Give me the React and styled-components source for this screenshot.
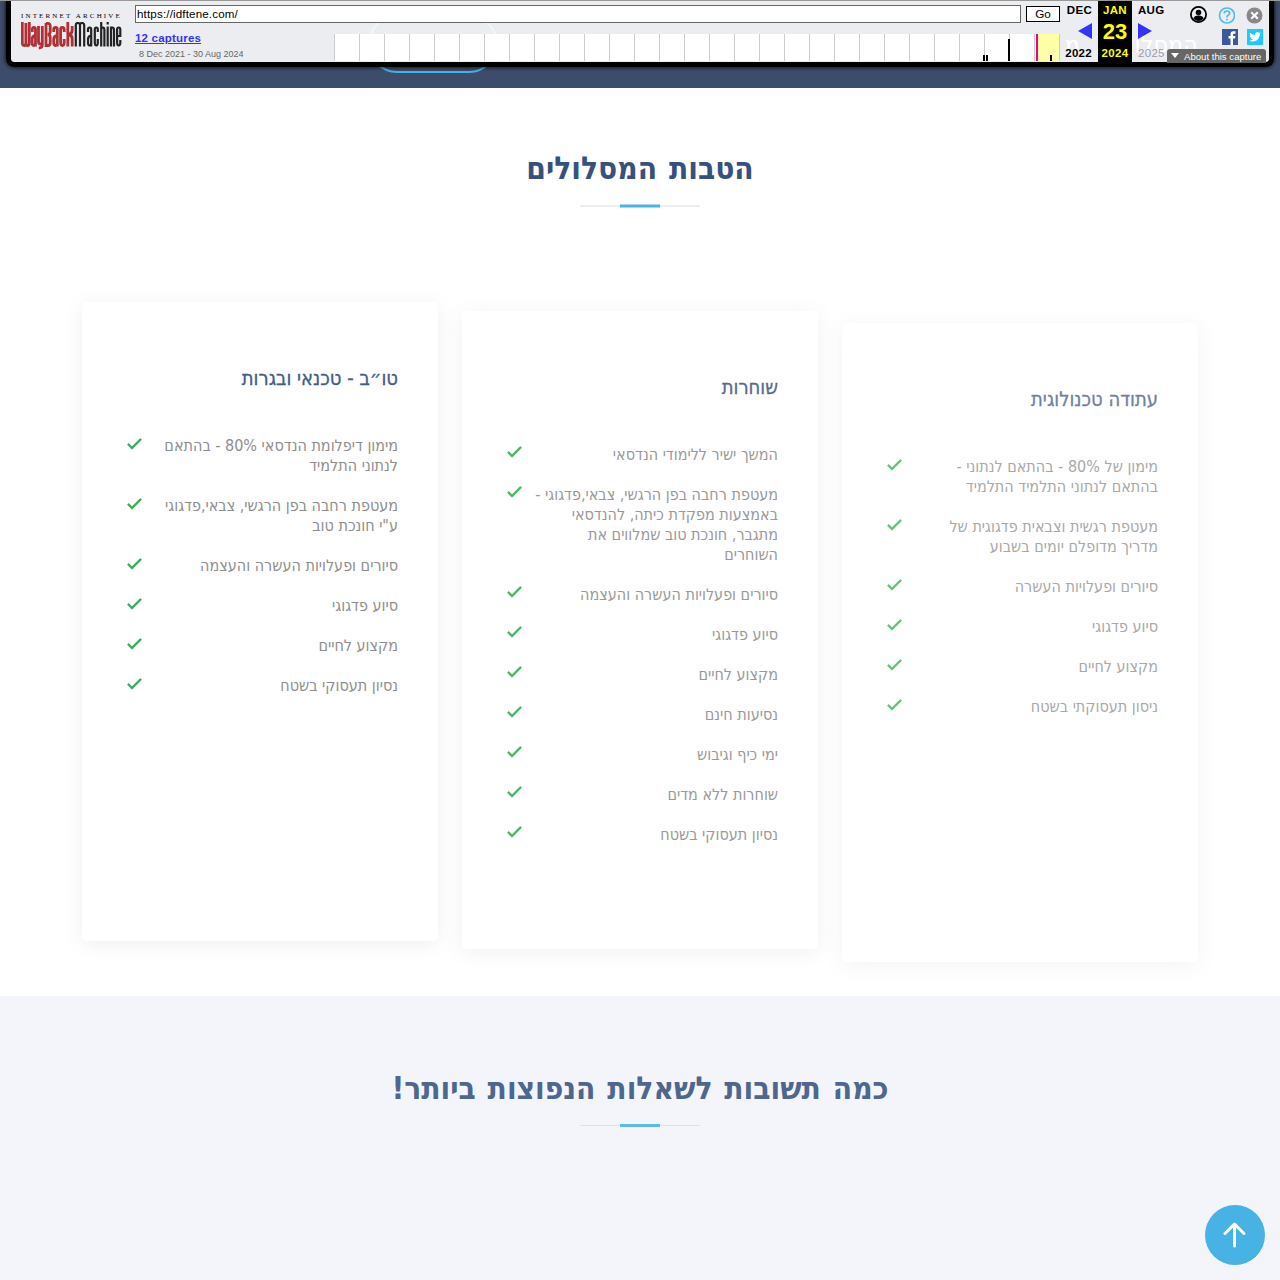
import React from "react";
import styled, { createGlobalStyle } from "styled-components";

const Global = createGlobalStyle`
  * { box-sizing: border-box; }
  body { margin: 0; background: #fff; font-family: "DejaVu Sans Condensed", "DejaVu Sans", sans-serif; overflow: hidden; }
  h2, h3, ul, p { margin: 0; padding: 0; }
`;

const Page = styled.div`
  direction: rtl;
  width: 1280px;
  height: 1280px;
  display: flex;
  flex-direction: column;
  overflow: hidden;
`;

/* site header, mostly covered by the archive toolbar */
const SiteHeader = styled.header`
  height: 88px;
  flex: none;
  position: relative;
  background: #3e4c6b;
`;
const Brand = styled.div`
  position: absolute;
  right: 82px;
  top: 26px;
  color: #fff;
  font-size: 24px;
  letter-spacing: 0.5px;
  word-spacing: 14px;
  line-height: 38px;
  white-space: nowrap;
`;
const Pill = styled.div`
  position: absolute;
  left: 368px;
  top: 15px;
  width: 130px;
  height: 58px;
  border: 2px solid #47b2e4;
  border-radius: 50px;
`;

const Toolbar = styled.div`
  direction: ltr;
  position: absolute;
  z-index: 5;
  top: 0;
  left: 6px;
  width: 1268px;
  height: 67px;
  border: 5px solid #000;
  border-top: 0;
  border-radius: 0 0 8px 8px;
  box-shadow: 0 0 4px #000;
  background: rgba(255, 255, 255, 0.9);
  background-clip: padding-box;
  display: flex;
  font-family: "Liberation Sans", Arial, sans-serif;
  color: #000;
`;
const TopLine = styled.div`
  position: absolute;
  z-index: 6;
  top: 0;
  left: 0;
  right: 0;
  height: 1px;
  background: #999;
`;
const Logo = styled.div`
  width: 124px;
  padding: 12px 0 0 10px;
  flex: none;
  svg { display: block; margin-top: 2px; }
`;
const LogoTop = styled.div`
  font: 7px/8px "Liberation Serif", serif;
  letter-spacing: 2.15px;
  white-space: nowrap;
`;
const Capture = styled.div`
  width: 925px;
  flex: none;
  display: flex;
  flex-direction: column;
`;
const UrlRow = styled.div`
  display: flex;
  gap: 5px;
  padding-top: 5px;
  height: 34px;
`;
const UrlBox = styled.div`
  width: 886px;
  height: 18px;
  border: 1px solid #666;
  background: #fff;
  font-size: 11.6px;
  letter-spacing: 0.15px;
  line-height: 16px;
  padding-left: 1px;
`;
const Go = styled.div`
  width: 34px;
  height: 16px;
  margin-top: 1px;
  border: 1px solid #000;
  background: #fff;
  font-size: 11.7px;
  line-height: 14px;
  text-align: center;
`;
const RangeRow = styled.div`
  display: flex;
  height: 28px;
`;
const Range = styled.div`
  width: 199px;
  margin-top: -4px;
  font-size: 9px;
  line-height: 16px;
  color: #666;
  white-space: nowrap;
  a { display: block; color: #33f; font-weight: bold; font-size: 11.5px; letter-spacing: 0.2px; line-height: 16px; text-decoration: underline; }
  span { padding-left: 4px; }
`;

const Month = styled.div`
  width: ${(p) => p.$w}px;
  flex: none;
  height: 62px;
  display: flex;
  flex-direction: column;
  align-items: ${(p) => p.$align};
  padding: 4px ${(p) => p.$pad}px 0;
  background: ${(p) => (p.$now ? "#000" : "transparent")};
  color: ${(p) => (p.$now ? "#ff0" : "#000")};
  font-size: 11.5px;
  letter-spacing: 0.3px;
  line-height: 13px;
  font-weight: bold;
  > svg { margin: 6px 0 8px; flex: none; display: block; }
`;
const Day = styled.div`
  font-size: 22px;
  letter-spacing: 0;
  line-height: 30px;
`;
const Year = styled.div`
  font-size: 11.5px;
  line-height: 13px;
  font-weight: ${(p) => (p.$dim ? 400 : 700)};
  color: ${(p) => (p.$dim ? "#9a9aac" : "inherit")};
`;
const Tools = styled.div`
  flex: 1;
  padding: 6px 6px 0 0;
  display: flex;
  flex-direction: column;
  align-items: flex-end;
`;
const IconRow = styled.div`
  display: flex;
  align-items: center;
  gap: ${(p) => p.$gap}px;
  margin-top: ${(p) => p.$mt || 0}px;
  svg { display: block; }
`;
const About = styled.div`
  position: absolute;
  right: 3px;
  top: 49px;
  width: 99px;
  height: 14px;
  border-radius: 3px 3px 0 0;
  background: #666;
  color: #fff;
  font-size: 9.6px;
  line-height: 15px;
  padding-left: 17px;
  white-space: nowrap;
  &::before {
    content: "";
    position: absolute;
    left: 4px;
    top: 4px;
    border: 4px solid transparent;
    border-top: 5px solid #fff;
    border-bottom: 0;
  }
`;

const Section = styled.section`
  flex: none;
  height: ${(p) => p.$h}px;
  padding-top: ${(p) => p.$top}px;
  background: ${(p) => p.$bg};
`;
const Title = styled.h2`
  opacity: ${(p) => p.$fade};
  color: #37517e;
  font-size: 31.4px;
  word-spacing: 2px;
  line-height: 38px;
  font-weight: 700;
  text-align: center;
`;
const Rule = styled.div`
  opacity: ${(p) => p.$fade};
  width: 120px;
  height: 3px;
  margin: 17px auto 0;
  background: linear-gradient(#47b2e4, #47b2e4) center / 40px 3px no-repeat,
    linear-gradient(#ddd, #ddd) center / 120px 1px no-repeat;
`;
const SoftRule = styled.div`
  width: 120px;
  height: 4px;
  margin: 17px auto 0;
  background: linear-gradient(#47b2e4, #47b2e4) center / 40px 2px no-repeat,
    linear-gradient(#a3d8f1, #a3d8f1) center / 40px 4px no-repeat,
    linear-gradient(#eee, #eee) center / 120px 2px no-repeat;
`;
const Cards = styled.div`
  direction: ltr;
  display: flex;
  align-items: flex-start;
  gap: 24px;
  padding: 0 82px;
  margin-top: 94px;
`;
const Card = styled.article`
  direction: rtl;
  width: 356px;
  height: ${(p) => p.$h}px;
  margin-top: ${(p) => p.$drop}px;
  opacity: ${(p) => p.$fade};
  padding: 64px 40px 60px;
  border-radius: 5px;
  background: #fff;
  box-shadow: 0 3px 20px -2px rgba(108, 108, 108, 0.13);
`;
const CardTitle = styled.h3`
  color: #37517e;
  font-size: 20px;
  line-height: 24px;
  font-weight: 500;
  -webkit-text-stroke: 0.3px #37517e;
  margin-bottom: 36px;
`;
const List = styled.ul`
  list-style: none;
  color: #888;
  font-size: 16px;
  line-height: 20px;
`;
const Item = styled.li`
  display: flex;
  justify-content: space-between;
  padding: 10px 0;
  svg { flex: none; display: block; margin: -5.5px 0 -10px; }
`;
const ItemText = styled.div`
  white-space: pre;
`;
const ToTop = styled.a`
  position: absolute;
  left: 1205px;
  top: 1205px;
  width: 60px;
  height: 60px;
  border-radius: 50%;
  background: #47b2e4;
  display: flex;
  align-items: center;
  justify-content: center;
`;

const Check = () => (
  <svg width="24" height="24" viewBox="0 0 24 24">
    <path fill="#28a745" stroke="#28a745" strokeWidth="0.300" d="m10 15.586-3.293-3.293-1.414 1.414L10 18.414l9.707-9.707-1.414-1.414z" />
  </svg>
);

const Machine = () => (
  <svg width="101" height="28" viewBox="0 0 101 28" fill="none">
    <g stroke="#b03035" strokeWidth="2.800">
      <path d="M1.300 0v21q0 2.500 1.800 2.500T4.900 21V1M4.900 21q0 2.500 1.700 2.500T8.300 21V0" />
      <path d="M11.300 10V7.500q0-2 1.600-2t1.600 2V24.500M14.500 13.500q-3.400.500-3.400 4v3q0 3 1.600 3t1.800-3" />
      <path d="M17.500 4v16q0 2 1.900 2t1.900-2M21.300 4v19q0 3-3.500 3" />
      <path d="M25 1v22.500h2q2.200 0 2.200-2.500v-5.500q0-3-2.500-3 2.500 0 2.500-3V4q0-2.600-2.200-2.600h-2" />
      <path d="M32.700 10V7.500q0-2 1.800-2t1.800 2V24.500M36.300 13.500q-3.600.500-3.600 4v3q0 3 1.700 3t1.900-3" />
      <path d="M43.200 10V7.500q0-2-1.800-2t-1.800 2v13q0 3 1.800 3t1.800-3V17" />
      <path d="M46.800 0v24.500M51.200 4v4q0 4-3.500 4.500 3.500.500 3.500 4.500v7.500" />
    </g>
    <g stroke="#222" strokeWidth="2.200">
      <path d="M54.800 24.500V3q0-2 2-2t2.200 2v21.500M59 3q0-2 2-2t2.200 2v21.500" />
      <path d="M67 10V7.500q0-2 1.600-2t1.600 2V24.500M70.200 13.500q-3.200.500-3.200 4v3q0 3 1.500 3t1.700-3" />
      <path d="M76.800 10V7.500q0-2-1.500-2t-1.500 2v13q0 3 1.500 3t1.500-3V17" />
      <path d="M80.200 0v24.500M80.200 8q.300-2.500 1.700-2.500t1.500 2v17M86.700 4.500v20M86.700 0v2.500" />
      <path d="M90 24.500V4.500M90 8q.300-2.500 1.500-2.500t1.500 2v17" />
      <path d="M96.200 14H99.300V7.500q0-2-1.600-2t-1.600 2v13q0 3 1.600 3t1.600-3V18" />
    </g>
  </svg>
);

const ticks = Array.from({ length: 30 }, (_, i) => i * 25);
const Timeline = () => (
  <svg width="726" height="28" viewBox="0 0 726 28" shapeRendering="crispEdges">
    <rect width="726" height="27" fill="#fff" />
    <rect x="701" width="25" height="27" fill="#ffffa5" />
    {ticks.map((x) => (
      <rect key={x} x={x} width="1" height="27" fill="#ccc" />
    ))}
    <path fill="#000" d="M649 21h2v6h-2zM652 21h2v6h-2zM674 5h2v22h-2zM716 21h2v6h-2z" />
    <rect x="702" width="2" height="27" fill="#ec008c" />
  </svg>
);

const cards = [
  {
    title: "טו״ב - טכנאי ובגרות",
    drop: 0,
    height: 639,
    fade: 0.94,
    items: [
      "מימון דיפלומת הנדסאי 80% - בהתאם\nלנתוני התלמיד",
      "מעטפת רחבה בפן הרגשי, צבאי,פדגוגי\nע\"י חונכת טוב",
      "סיורים ופעלויות העשרה והעצמה",
      "סיוע פדגוגי",
      "מקצוע לחיים",
      "נסיון תעסוקי בשטח",
    ],
  },
  {
    title: "שוחרות",
    drop: 8.5,
    height: 638.5,
    fade: 0.85,
    items: [
      "המשך ישיר ללימודי הנדסאי",
      "מעטפת רחבה בפן הרגשי, צבאי,פדגוגי -\nבאמצעות מפקדת כיתה, להנדסאי\nמתגבר, חונכת טוב שמלווים את\nהשוחרים",
      "סיורים ופעלויות העשרה והעצמה",
      "סיוע פדגוגי",
      "מקצוע לחיים",
      "נסיעות חינם",
      "ימי כיף וגיבוש",
      "שוחרות ללא מדים",
      "נסיון תעסוקי בשטח",
    ],
  },
  {
    title: "עתודה טכנולוגית",
    drop: 21,
    height: 639,
    fade: 0.72,
    items: [
      "מימון של 80% - בהתאם לנתוני -\nבהתאם לנתוני התלמיד התלמיד",
      "מעטפת רגשית וצבאית פדגוגית של\nמדריך מדופלם יומים בשבוע",
      "סיורים ופעלויות העשרה",
      "סיוע פדגוגי",
      "מקצוע לחיים",
      "ניסון תעסוקתי בשטח",
    ],
  },
];

export default function App() {
  return (
    <Page>
      <Global />
      <TopLine />
      <SiteHeader>
        <Brand>המסלולים מ</Brand>
        <Pill />
      </SiteHeader>
      <Toolbar>
        <Logo>
          <LogoTop>INTERNET ARCHIVE</LogoTop>
          <Machine />
        </Logo>
        <Capture>
          <UrlRow>
            <UrlBox>https://idftene.com/</UrlBox>
            <Go>Go</Go>
          </UrlRow>
          <RangeRow>
            <Range>
              <a>12 captures</a>
              <span>8 Dec 2021 - 30 Aug 2024</span>
            </Range>
            <Timeline />
          </RangeRow>
        </Capture>
        <Month $w={38} $align="flex-end" $pad={6}>
          DEC
          <svg width="14" height="16"><path d="M14 0v16L0 8z" fill="#33f" /></svg>
          <Year>2022</Year>
        </Month>
        <Month $w={34} $align="center" $pad={0} $now>
          JAN
          <Day>23</Day>
          <Year>2024</Year>
        </Month>
        <Month $w={38} $align="flex-start" $pad={6}>
          AUG
          <svg width="14" height="16"><path d="M0 0v16l14-8z" fill="#33f" /></svg>
          <Year $dim>2025</Year>
        </Month>
        <Tools>
          <IconRow $gap={11}>
            <svg width="18" height="18" viewBox="0 0 18 18">
              <circle cx="9.500" cy="8.500" r="7.600" fill="none" stroke="#000" strokeWidth="1.800" />
              <circle cx="9.500" cy="6.500" r="2.800" />
              <path d="M4.300 12.500q1-3 5.200-3t5.200 3q-2 2.500-5.200 2.500t-5.200-2.500z" />
            </svg>
            <svg width="17" height="18" viewBox="0 0 17 18">
              <circle cx="9" cy="9.500" r="7.500" fill="none" stroke="#55b9f0" strokeWidth="1.700" />
              <path d="M6.200 7.500q0-2.500 2.700-2.500t2.700 2.300q0 1.200-1.400 2T9 11.500M9 12.700v1.700" fill="none" stroke="#55b9f0" strokeWidth="1.700" />
            </svg>
            <svg width="17" height="18" viewBox="0 0 17 18">
              <circle cx="8.500" cy="9.500" r="8" fill="#888" />
              <path d="M5.200 6.200l6.600 6.600M11.800 6.200l-6.600 6.600" stroke="#fff" strokeWidth="2.200" />
            </svg>
          </IconRow>
          <IconRow $gap={9} $mt={5}>
            <svg width="16" height="16" viewBox="0 0 16 16">
              <path fill="#3b5998" d="M0 0h16v16H0z" />
              <path fill="#fff" d="M8.500 16V9.500H6.500V7h2V5.300Q8.500 2.300 11.300 2.300h2.200v2.400H12q-1 0-1 1V7h2.400l-.3 2.500H11V16z" />
            </svg>
            <svg width="16" height="16" viewBox="0 0 16 16">
              <path fill="#1dcaff" d="M0 0h16v16H0z" />
              <path fill="#fff" transform="translate(2.300 2.100) scale(.48)" d="M23.950 4.570a10 10 0 0 1-2.820.770 4.960 4.960 0 0 0 2.160-2.720c-.950.550-2 .950-3.130 1.180a4.920 4.920 0 0 0-8.380 4.480C7.690 8.090 4.070 6.130 1.640 3.160a4.820 4.820 0 0 0-.670 2.480c0 1.710.870 3.210 2.190 4.090a4.900 4.900 0 0 1-2.230-.610v.060a4.920 4.920 0 0 0 3.950 4.830 5 5 0 0 1-2.210.080 4.940 4.940 0 0 0 4.600 3.420A9.870 9.870 0 0 1 0 19.540a14 14 0 0 0 7.550 2.210c9.050 0 14-7.500 14-13.980v-.640a9.900 9.900 0 0 0 2.400-2.560z" />
            </svg>
          </IconRow>
        </Tools>
        <About>About this capture</About>
      </Toolbar>

      <Section $h={908} $top={61} $bg="#fff">
        <Title $fade={1}>הטבות המסלולים</Title>
        <SoftRule />
        <Cards>
          {cards.map((c) => (
            <Card key={c.title} $drop={c.drop} $h={c.height} $fade={c.fade}>
              <CardTitle>{c.title}</CardTitle>
              <List>
                {c.items.map((t) => (
                  <Item key={t}>
                    <ItemText>{t}</ItemText>
                    <Check />
                  </Item>
                ))}
              </List>
            </Card>
          ))}
        </Cards>
      </Section>

      <Section $h={284} $top={73} $bg="#f3f5fa">
        <Title $fade={0.87}>כמה תשובות לשאלות הנפוצות ביותר!</Title>
        <Rule $fade={0.87} />
      </Section>

      <ToTop>
        <svg width="24" height="26" viewBox="0 0 24 26" fill="none" stroke="#fff" strokeWidth="3" strokeLinecap="round" strokeLinejoin="round">
          <path d="M11.500 24V2.500M2 11.500l9.500-9.500 9.500 9.500" />
        </svg>
      </ToTop>
    </Page>
  );
}
